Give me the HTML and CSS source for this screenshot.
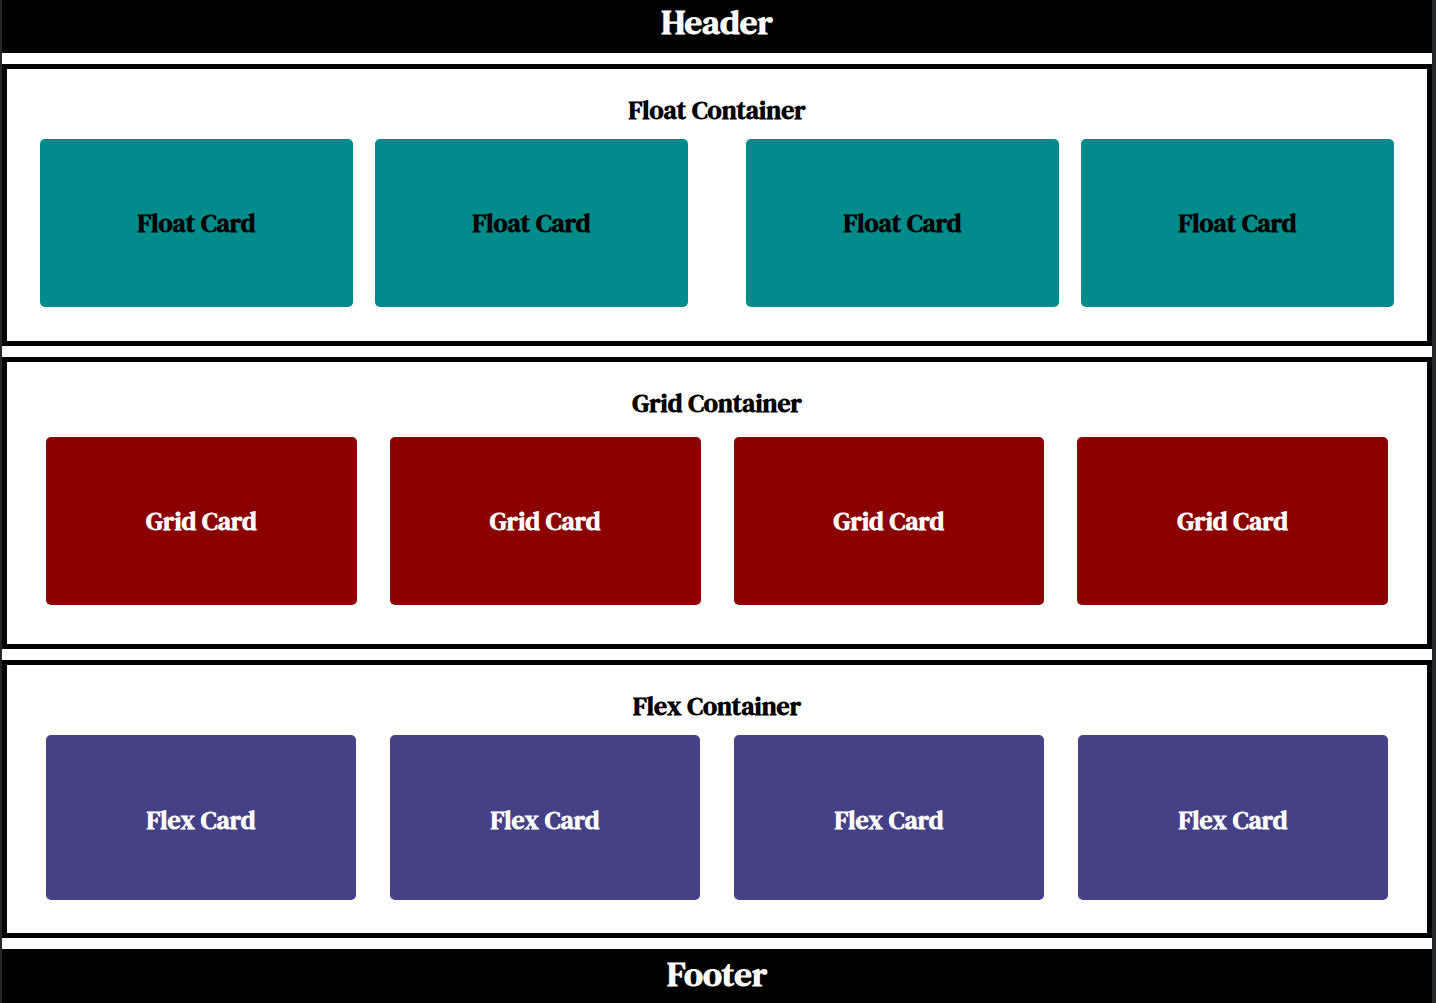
FILE: index.html
```html
<!DOCTYPE html>
<html lang="en">
<head>
<meta charset="utf-8">
<meta name="viewport" content="width=device-width, initial-scale=1">
<title>Float, Grid and Flex</title>
<link rel="stylesheet" href="styles.css">
</head>
<body>
<header class="bar"><h1>Header</h1></header>
<main>
  <section class="container">
    <h2>Float Container</h2>
    <div class="float-row">
      <div class="float-pair">
        <div class="card float-card">Float Card</div>
        <div class="card float-card">Float Card</div>
      </div>
      <div class="float-pair">
        <div class="card float-card">Float Card</div>
        <div class="card float-card">Float Card</div>
      </div>
    </div>
  </section>
  <section class="container">
    <h2>Grid Container</h2>
    <div class="grid-row">
      <div class="card grid-card">Grid Card</div>
      <div class="card grid-card">Grid Card</div>
      <div class="card grid-card">Grid Card</div>
      <div class="card grid-card">Grid Card</div>
    </div>
  </section>
  <section class="container">
    <h2>Flex Container</h2>
    <div class="flex-row">
      <div class="card flex-card">Flex Card</div>
      <div class="card flex-card">Flex Card</div>
      <div class="card flex-card">Flex Card</div>
      <div class="card flex-card">Flex Card</div>
    </div>
  </section>
</main>
<footer class="bar"><h1>Footer</h1></footer>
</body>
</html>
```

FILE: styles.css
```css
* {
  box-sizing: border-box;
}

body {
  margin: 0;
  border-left: 2px solid #262626;
  border-right: 4px solid #262729;
  background: #fff;
  color: #000;
  font-family: "DM Serif Text", "Liberation Serif", serif;
  font-weight: 700;
}

h1,
h2 {
  margin: 0;
  text-align: center;
}

h1 {
  font-size: 35px;
  line-height: 44px;
}

h2 {
  font-size: 26px;
  line-height: 34px;
}

.bar {
  padding-bottom: 9px;
  background: #000;
  color: #fff;
}

.bar:last-child {
  padding: 3px 0 7px;
}

main {
  display: flex;
  flex-direction: column;
  gap: 11px;
  padding: 11px 0;
}

.container {
  padding-top: 24px;
  border: 5px solid #000;
}

.card {
  display: flex;
  flex: 1;
  align-items: center;
  justify-content: center;
  height: 168px;
  border-radius: 5px;
  font-size: 26px;
  line-height: 34px;
}

.float-row {
  display: flex;
  gap: 58px;
  padding: 12px 33px 34px;
}

.float-pair {
  display: flex;
  flex: 1;
  gap: 22px;
}

.float-card {
  background: #008b8b;
}

.grid-row {
  display: grid;
  grid-template-columns: repeat(4, 1fr);
  gap: 33px;
  padding: 17px 39px 39px;
}

.grid-card {
  background: #8b0000;
  color: #fff;
}

.flex-row {
  display: flex;
  gap: 34px;
  padding: 12px 39px 33px;
}

.flex-card {
  height: 165px;
  padding-top: 4px;
  background: #454187;
  color: #fff;
}
```
